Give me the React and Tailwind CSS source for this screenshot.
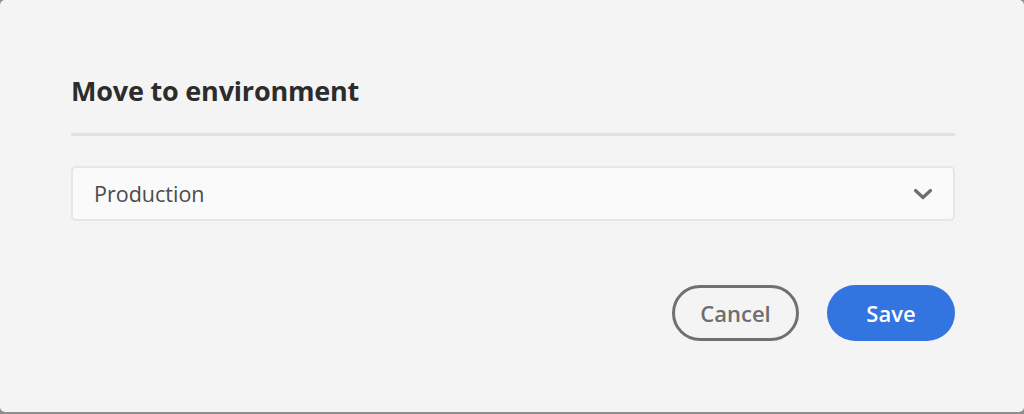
import { useState } from "react";

const ChevronDown = () => (
    <svg width="20" height="12" viewBox="0 0 20 12" fill="none">
        <path
            d="M2.5 2.5 L10 9.5 L17.5 2.5"
            stroke="#6e6e6e"
            strokeWidth="3.2"
            strokeLinecap="round"
            strokeLinejoin="round"
        />
    </svg>
);

const App = () => {
    const [env] = useState("Production");

    return (
        <div className="h-[414px] w-[1024px] bg-[#8e8e8e] font-['Open_Sans',sans-serif]">
            <div className="flex h-[412px] flex-col rounded-[5px] bg-[#f4f4f4] pl-[71px] pr-[69px] pt-[72px]">
                <h2 className="text-[27px] font-bold leading-[38px] tracking-[-0.2px] text-[#2c2c2c]">
                    Move to environment
                </h2>
                <div className="mt-[23px] h-[3px] bg-[#e2e2e2]"></div>

                <div className="mt-[30px] flex h-[55px] items-center justify-between rounded-[5px] border-2 border-[#e6e6e6] bg-[#fafafa] pl-[21px] pr-[20px]">
                    <span className="text-[21.5px] leading-none text-[#4b4b4b]">{env}</span>
                    <ChevronDown />
                </div>

                <div className="mt-[64px] flex justify-end gap-[28px]">
                    <button className="flex h-[56px] w-[127px] items-center justify-center rounded-full border-[3px] border-[#707070] text-[22px] font-semibold text-[#6e6e6e]">
                        Cancel
                    </button>
                    <button className="flex h-[56px] w-[128px] items-center justify-center rounded-full bg-[#3274e0] text-[22px] font-semibold text-white">
                        Save
                    </button>
                </div>
            </div>
        </div>
    );
};

export default App;
